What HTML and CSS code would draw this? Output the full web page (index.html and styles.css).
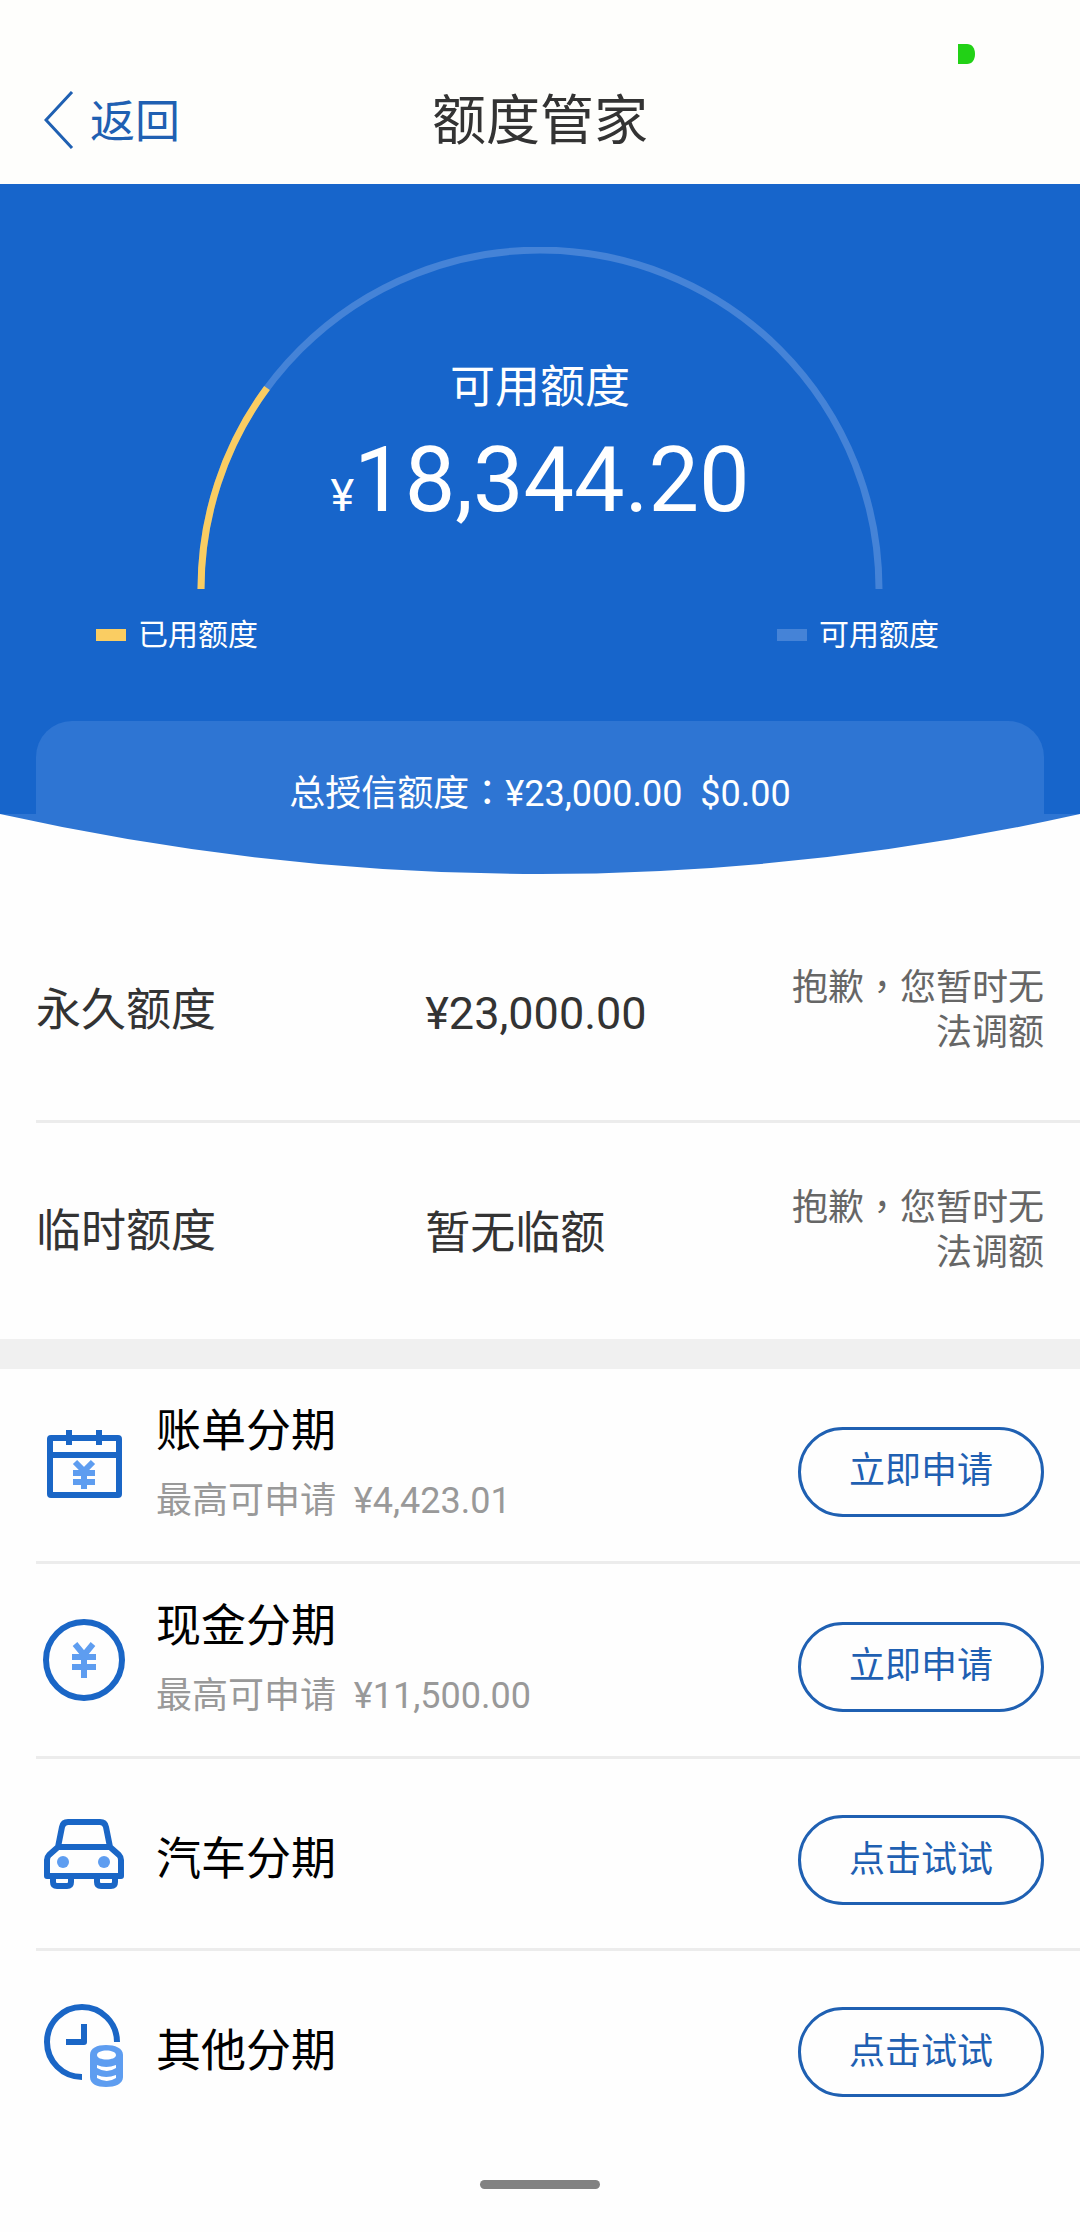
FILE: index.html
```html
<!DOCTYPE html>
<html lang="zh-CN">
<head>
<meta charset="utf-8">
<meta name="viewport" content="width=device-width">
<title>额度管家</title>
<link rel="stylesheet" href="styles.css">
</head>
<body>
<header class="top">
  <div class="status">
    <svg class="battery" viewBox="0 0 17 20" aria-hidden="true"><path d="M0 0h9c5 0 8 4 8 10s-3 10-8 10H0z"/></svg>
  </div>
  <nav class="navbar">
    <a class="back" href="#">
      <svg class="chevron" viewBox="0 0 30 58" aria-hidden="true"><path d="M28 1 2 29l26 28"/></svg>
      <span>返回</span>
    </a>
    <h1 class="title">额度管家</h1>
  </nav>
</header>

<main>
  <section class="hero">
    <div class="gauge">
      <svg class="arc" viewBox="0 0 686 342" aria-hidden="true">
        <path class="arc-free" d="M4 342A339 339 0 0 1 682 342"/>
        <path class="arc-used" d="M4 342A339 339 0 0 1 70 141"/>
      </svg>
      <div class="gauge-text">
        <p class="gauge-label">可用额度</p>
        <p class="amount"><span class="currency">¥</span>18,344.20</p>
      </div>
    </div>
    <ul class="legend">
      <li class="legend-item"><span class="swatch swatch-used"></span>已用额度</li>
      <li class="legend-item"><span class="swatch"></span>可用额度</li>
    </ul>
    <p class="total">总授信额度<span class="mark" lang="zh-Hant">：</span>¥23,000.00&nbsp; $0.00</p>
  </section>
  <svg class="curve" viewBox="0 0 1080 60" preserveAspectRatio="none" aria-hidden="true"><path d="M0 0Q540 120 1080 0z"/></svg>

  <section class="limits">
    <div class="limit">
      <h2 class="limit-name">永久额度</h2>
      <p class="limit-value">¥23,000.00</p>
      <p class="limit-note">抱歉<span class="mark" lang="zh-Hant">，</span>您暂时无法调额</p>
    </div>
    <div class="limit">
      <h2 class="limit-name">临时额度</h2>
      <p class="limit-value">暂无临额</p>
      <p class="limit-note">抱歉<span class="mark" lang="zh-Hant">，</span>您暂时无法调额</p>
    </div>
  </section>

  <ul class="plans">
    <li class="plan plan-detailed">
      <svg class="icon" viewBox="0 0 90 90" aria-hidden="true">
        <rect class="line" x="11" y="18" width="69" height="57" rx="1"/>
        <path class="line" d="M11 35h69M30 10v15M60 10v15"/>
        <path class="yen" d="m36 42 9 9 9-9M34 53h22M34 62h22M45 50v19"/>
      </svg>
      <div class="plan-text">
        <h2 class="plan-name">账单分期</h2>
        <p class="plan-sub">最高可申请&nbsp; ¥4,423.01</p>
      </div>
      <button class="apply" type="button">立即申请</button>
    </li>
    <li class="plan plan-detailed">
      <svg class="icon" viewBox="0 0 90 90" aria-hidden="true">
        <circle class="line" cx="45" cy="45" r="38"/>
        <path class="yen" d="m36 29 9 11 9-11M33 42h24M33 52h24M45 38v25"/>
      </svg>
      <div class="plan-text">
        <h2 class="plan-name">现金分期</h2>
        <p class="plan-sub">最高可申请&nbsp; ¥11,500.00</p>
      </div>
      <button class="apply" type="button">立即申请</button>
    </li>
    <li class="plan">
      <svg class="icon" viewBox="0 0 90 90" aria-hidden="true">
        <path class="line" d="M19 38l4-20q1-5 6-5h32q5 0 6 5l4 20M19 38h52l9 8q2 2 2 5v16H8V51q0-3 2-5zM14 67v6q0 4 4 4h10q4 0 4-4v-6M58 67v6q0 4 4 4h10q4 0 4-4v-6"/>
        <circle class="fill" cx="24" cy="53" r="6"/>
        <circle class="fill" cx="65" cy="53" r="6"/>
      </svg>
      <div class="plan-text">
        <h2 class="plan-name">汽车分期</h2>
      </div>
      <button class="apply" type="button">点击试试</button>
    </li>
    <li class="plan">
      <svg class="icon" viewBox="0 0 90 90" aria-hidden="true">
        <path class="line" d="M78 41A35 35 0 1 0 43 76M45 23v18H27"/>
        <path class="fill" d="M51 54c0-7 7-10 16-10S84 47 84 54v22c0 7-8 10-17 10S51 83 51 76z"/>
        <path class="gap" d="M58 54c0-6 19-6 19 0s-19 6-19 0zM58 64q9 4 19 0v3q-9 6-19 0zM58 74q9 4 19 0v3q-9 6-19 0z"/>
      </svg>
      <div class="plan-text">
        <h2 class="plan-name">其他分期</h2>
      </div>
      <button class="apply" type="button">点击试试</button>
    </li>
  </ul>
</main>
<footer class="home"><span class="home-bar"></span></footer>
</body>
</html>
```

FILE: styles.css
```css
:root {
  --blue: #1765cb;
  --blue-light: #2e75d3;
  --track: #4583d7;
  --yellow: #facd62;
  --link: #1f60b2;
  --rule: #ececec;
}

* {
  box-sizing: border-box;
  margin: 0;
  padding: 0;
}

body {
  background: #fefefe;
  color: #333;
  font-family: Roboto, "Noto Sans CJK SC", sans-serif;
  font-size: 36px;
  line-height: 45px;
}

ul {
  list-style: none;
}

h1,
h2 {
  font-weight: 400;
}

/* Full-width punctuation centred in its cell */
.mark {
  font-family: "Noto Sans CJK TC", sans-serif;
  line-height: 0;
}

/* Status bar and navigation */
.top {
  background: #fefefc;
}

.status {
  display: flex;
  justify-content: flex-end;
  align-items: flex-end;
  height: 64px;
  padding-right: 105px;
}

.battery {
  width: 17px;
  height: 20px;
  fill: #22d116;
}

.navbar {
  display: grid;
  grid-template-columns: 1fr auto 1fr;
  align-items: center;
  height: 120px;
  padding: 0 44px 4px;
}

.back {
  display: flex;
  align-items: center;
  gap: 16px;
  color: var(--link);
  font-size: 45px;
  text-decoration: none;
}

.chevron {
  width: 30px;
  height: 58px;
  margin-bottom: 4px;
  fill: none;
  stroke: currentColor;
  stroke-width: 3;
}

.title {
  font-size: 54px;
  line-height: 64px;
}

/* Credit summary */
.hero {
  padding: 63px 36px 0;
  background: var(--blue);
  color: #fff;
}

.gauge {
  display: grid;
  justify-content: center;
}

.arc,
.gauge-text {
  grid-area: 1 / 1;
}

.arc {
  width: 686px;
  max-width: 100%;
  fill: none;
  stroke-width: 7;
}

.arc-free {
  stroke: var(--track);
}

.arc-used {
  stroke: var(--yellow);
}

.gauge-text {
  padding-top: 114px;
  text-align: center;
}

.gauge-label {
  font-size: 45px;
  line-height: 54px;
}

.amount {
  font-size: 90px;
  line-height: 132px;
}

.currency {
  font-size: 45px;
}

.legend {
  display: flex;
  justify-content: space-between;
  padding: 23px 105px 0 60px;
  font-size: 30px;
}

.legend-item {
  display: flex;
  align-items: center;
  gap: 12px;
}

.swatch {
  width: 30px;
  height: 12px;
  background: var(--track);
}

.swatch-used {
  background: var(--yellow);
}

.total {
  margin-top: 64px;
  padding-top: 53px;
  border-radius: 36px 36px 0 0;
  background: var(--blue-light);
  line-height: 40px;
  text-align: center;
}

.curve {
  display: block;
  width: 100%;
  height: 60px;
  fill: var(--blue-light);
}

/* Credit limits */
.limits {
  padding-top: 27px;
  border-bottom: 30px solid #f0f0f0;
}

.limit {
  display: grid;
  grid-template-columns: 39fr 35fr 27fr;
  align-items: center;
  min-height: 219px;
  margin-left: 36px;
  padding-right: 36px;
}

.limit + .limit,
.plan + .plan {
  border-top: 3px solid var(--rule);
}

.limit-name,
.limit-value {
  font-size: 45px;
}

.limit-value {
  padding-top: 5px;
}

.limit-note {
  color: #666;
  text-align: right;
}

/* Instalment plans */
.plan {
  display: flex;
  box-sizing: content-box;
  align-items: center;
  min-height: 189px;
  margin-left: 36px;
  padding: 0 36px 0 3px;
}

.plan-detailed {
  min-height: 192px;
}

.icon {
  flex: none;
  width: 90px;
  height: 90px;
}

.line {
  fill: none;
  stroke: #1a66c6;
  stroke-width: 6;
  stroke-linejoin: round;
}

.yen {
  fill: none;
  stroke: #5e9df0;
  stroke-width: 6;
}

.fill {
  fill: #5e9df0;
}

.gap {
  fill: #fff;
}

.plan-text {
  flex: 1;
  padding: 13px 0 0 27px;
}

.plan-detailed .plan-text {
  padding: 0 0 4px 27px;
}

.plan-name {
  color: #000;
  font-size: 45px;
  line-height: 66px;
}

.plan-sub {
  margin-top: 9px;
  color: #999;
  line-height: 54px;
}

.apply {
  width: 246px;
  height: 90px;
  margin-top: 13px;
  border: 3px solid var(--link);
  border-radius: 45px;
  background: none;
  color: var(--link);
  font: inherit;
}

/* Home indicator */
.home {
  display: flex;
  justify-content: center;
  padding: 40px 0 43px;
}

.home-bar {
  width: 120px;
  height: 9px;
  border-radius: 5px;
  background: #828282;
}
```
